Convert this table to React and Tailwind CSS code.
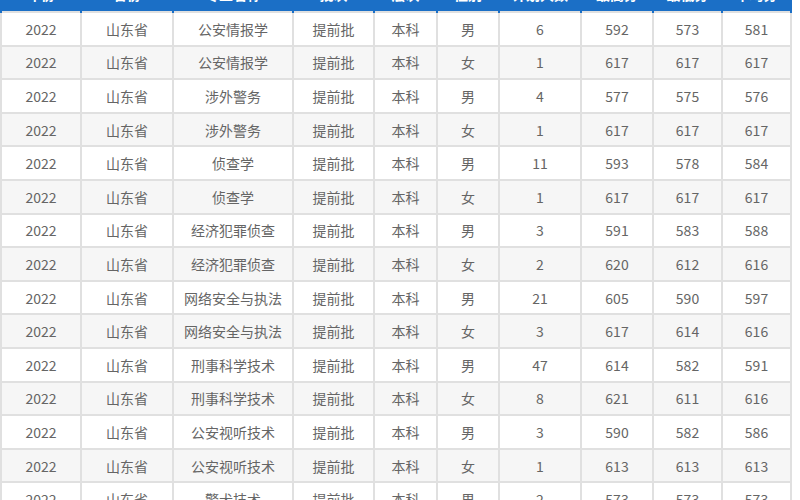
import React from 'react';

// 录取分数表（截图只露出表头底部）
const cols = [80, 92, 120, 81, 63, 62, 82, 72, 69, 69];
const heads = ['年份', '省份', '专业名称', '批次', '层次', '性别', '计划人数', '最高分', '最低分', '平均分'];

const rows = [
  ['公安情报学', '男', 6, 592, 573, 581],
  ['公安情报学', '女', 1, 617, 617, 617],
  ['涉外警务', '男', 4, 577, 575, 576],
  ['涉外警务', '女', 1, 617, 617, 617],
  ['侦查学', '男', 11, 593, 578, 584],
  ['侦查学', '女', 1, 617, 617, 617],
  ['经济犯罪侦查', '男', 3, 591, 583, 588],
  ['经济犯罪侦查', '女', 2, 620, 612, 616],
  ['网络安全与执法', '男', 21, 605, 590, 597],
  ['网络安全与执法', '女', 3, 617, 614, 616],
  ['刑事科学技术', '男', 47, 614, 582, 591],
  ['刑事科学技术', '女', 8, 621, 611, 616],
  ['公安视听技术', '男', 3, 590, 582, 586],
  ['公安视听技术', '女', 1, 613, 613, 613],
  ['警犬技术', '男', 2, 573, 573, 573],
];

const App = () => {
  return (
    <div className="w-[800px] h-[500px] overflow-hidden bg-white font-['Noto_Sans_CJK_SC',sans-serif]">
      <table className="table-fixed border-collapse w-[790px] -mt-[22px] text-[14px] text-[#656565]">
        <colgroup>
          {cols.map((w, i) => (
            <col key={i} style={{ width: w }} />
          ))}
        </colgroup>
        <thead>
          <tr className="bg-[#1b6fc6] text-white">
            {heads.map((h) => (
              <th key={h} className="h-[34px] border-x-2 border-[#1b6fc6] font-bold text-center">
                {h}
              </th>
            ))}
          </tr>
        </thead>
        <tbody>
          {rows.map((r, i) => (
            <tr key={i} className={i % 2 === 1 ? 'bg-[#f6f6f6]' : 'bg-white'}>
              {['2022', '山东省', r[0], '提前批', '本科', ...r.slice(1)].map((c, j) => (
                <td key={j} className="h-[33.6px] p-0 border-2 border-[#e0e0e0] text-center leading-none">
                  {c}
                </td>
              ))}
            </tr>
          ))}
        </tbody>
      </table>
    </div>
  );
};

export default App;
